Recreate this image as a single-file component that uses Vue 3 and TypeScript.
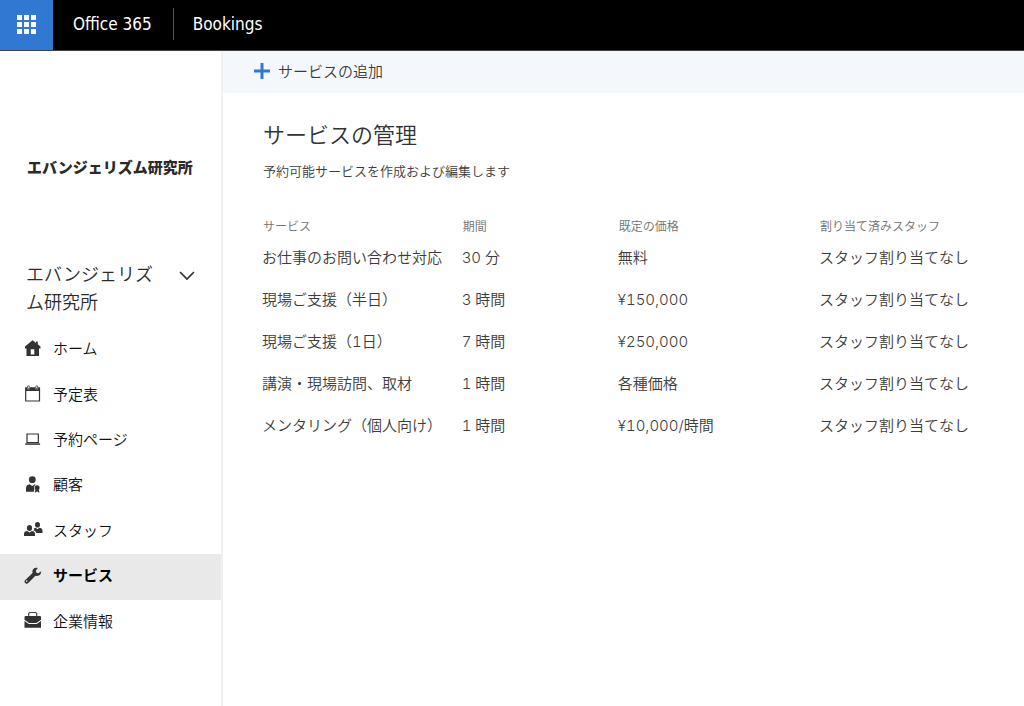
<script setup lang="ts">
import { ref } from 'vue'

interface NavItem {
  id: string
  label: string
}

interface Service {
  name: string
  duration: string
  price: string
  staff: string
}

const navItems: NavItem[] = [
  { id: 'home', label: 'ホーム' },
  { id: 'calendar', label: '予定表' },
  { id: 'page', label: '予約ページ' },
  { id: 'customers', label: '顧客' },
  { id: 'staff', label: 'スタッフ' },
  { id: 'services', label: 'サービス' },
  { id: 'business', label: '企業情報' },
]

const active = ref('services')

const services: Service[] = [
  { name: 'お仕事のお問い合わせ対応', duration: '30 分', price: '無料', staff: 'スタッフ割り当てなし' },
  { name: '現場ご支援（半日）', duration: '3 時間', price: '¥150,000', staff: 'スタッフ割り当てなし' },
  { name: '現場ご支援（1日）', duration: '7 時間', price: '¥250,000', staff: 'スタッフ割り当てなし' },
  { name: '講演・現場訪問、取材', duration: '1 時間', price: '各種価格', staff: 'スタッフ割り当てなし' },
  { name: 'メンタリング（個人向け）', duration: '1 時間', price: '¥10,000/時間', staff: 'スタッフ割り当てなし' },
]
</script>

<template>
  <div class="app">
    <header class="topbar">
      <button class="launcher" type="button" aria-label="アプリ起動ツール">
        <svg width="19" height="19" viewBox="0 0 19 19" fill="#fff" aria-hidden="true">
          <path d="M0 0h5v5H0zM7 0h5v5H7zM14 0h5v5h-5zM0 7h5v5H0zM7 7h5v5H7zM14 7h5v5h-5zM0 14h5v5H0zM7 14h5v5H7zM14 14h5v5h-5z" />
        </svg>
      </button>
      <a class="brand" href="#">Office 365</a>
      <a class="product" href="#">Bookings</a>
    </header>

    <div class="body">
      <aside class="sidebar">
        <div class="logo">エバンジェリズム研究所</div>
        <button class="business" type="button">
          <span class="business-name">エバンジェリズム研究所</span>
          <svg class="chevron" width="16" height="10" viewBox="0 0 16 10" fill="none" stroke="#333" stroke-width="1.7" aria-hidden="true">
            <path d="M1 1l7 7 7-7" />
          </svg>
        </button>
        <nav class="nav">
          <a
            v-for="item in navItems"
            :key="item.id"
            href="#"
            class="nav-item"
            :class="{ active: active === item.id }"
            :aria-current="active === item.id ? 'page' : undefined"
            @click.prevent="active = item.id"
          >
            <svg class="icon" width="20" height="20" viewBox="0 0 20 20" fill="#333" aria-hidden="true">
              <g v-if="item.id === 'home'">
                <path fill-rule="evenodd" d="M9.500 1.200L13 3.900V2.400h1.800v2.900L17.500 7.500v2H16V17H3.500V9.500H2v-2zM7.700 10.200V15.500h3.600v-5.300z" />
              </g>
              <g v-else-if="item.id === 'calendar'">
                <path d="M2.700 4h13.800v13H2.700z" fill="none" stroke="#333" stroke-width="1.200" />
                <path d="M2.500 3.500H4v1.700h2.800V3.500h5.600v1.700h2.800V3.500h1.500V7h-14.200z" />
                <path d="M4.600 1.900v2.700h1.700V1.900zM12.900 1.900v2.700h1.700V1.900z" fill="#fff" stroke="#555" stroke-width="0.800" />
              </g>
              <g v-else-if="item.id === 'page'">
                <path d="M4 4h11.300v8.500H4z" fill="none" stroke="#333" stroke-width="1.200" />
                <path d="M2.200 13.300h14.900v1.500H2.200z" />
              </g>
              <g v-else-if="item.id === 'customers'">
                <ellipse cx="9.300" cy="4.700" rx="3.400" ry="3.400" />
                <path d="M3 16.700v-3.500c0-2.200 1.200-3.800 3.600-4l2.700 1.700 2.600-1.600.9.500c-1.700.9-2.500 2.700-1.500 4.400l-.4 2.500z" />
                <circle cx="14.100" cy="12.700" r="2.500" />
                <path d="M12.500 14.700h3.200l.9 2.800-1.500-.3-1-.9-1 .9-1.500.3z" />
              </g>
              <g v-else-if="item.id === 'staff'">
                <ellipse cx="14.500" cy="4.700" rx="2.500" ry="2.800" />
                <path d="M11 8.300l1.800-.5 1.700 1.400 1.700-1.400c2.200.3 3.300 1.300 3.300 2.900v2.400h-6.300c-.2-1.400-1-2.100-2.500-2.500.6-.8.700-1.500.3-2.300z" />
                <ellipse cx="6.500" cy="8" rx="2.600" ry="2.900" />
                <path d="M1 16.100v-2.400c0-1.600 1.200-2.500 3.200-2.700l2.300 1.600L8.800 11c2 .2 3.200 1.100 3.200 2.700v2.400z" />
              </g>
              <g v-else-if="item.id === 'services'">
                <path fill-rule="evenodd" d="M14.800 2l-2 2.700.6 2 2 .5 2.700-2c.2 2.900-1.600 4.800-4.300 4.700l-1.400-.1-7.100 7.200c-.9.900-2.300.9-3.200.1-.8-.9-.8-2.200.2-3.100l7.300-6.900-.2-1.300c-.1-2.600 2-4.700 5.400-3.800zM3.700 14.300a.8.800 0 1 0 .1 1.600.8.800 0 0 0-.1-1.600z" />
              </g>
              <g v-else>
                <path d="M5.700 5V2.400l1-.9h6l1 .9V5" fill="none" stroke="#444" stroke-width="1.200" />
                <path d="M2 5h15.500l.5 1v2.700l-4.600 3.300H6.100L1.500 8.700V6z" />
                <path d="M1.500 10l4.300 3h7.900l4.300-3v6.700H1.500z" />
              </g>
            </svg>
            <span class="nav-label">{{ item.label }}</span>
          </a>
        </nav>
      </aside>

      <main class="main">
        <div class="toolbar">
          <button class="add" type="button">
            <svg width="16" height="16" viewBox="0 0 16 16" fill="#3078d2" aria-hidden="true">
              <path d="M6.500 0h3v6.500H16v3H9.500V16h-3V9.500H0v-3h6.500z" />
            </svg>
            <span class="add-label">サービスの追加</span>
          </button>
        </div>
        <section class="content">
          <div class="intro">
            <h1>サービスの管理</h1>
            <p class="subtitle">予約可能サービスを作成および編集します</p>
          </div>
          <table class="services">
            <thead>
              <tr>
                <th class="col-name" scope="col">サービス</th>
                <th class="col-duration" scope="col">期間</th>
                <th class="col-price" scope="col">既定の価格</th>
                <th scope="col">割り当て済みスタッフ</th>
              </tr>
            </thead>
            <tbody>
              <tr v-for="service in services" :key="service.name">
                <td>{{ service.name }}</td>
                <td>{{ service.duration }}</td>
                <td>{{ service.price }}</td>
                <td>{{ service.staff }}</td>
              </tr>
            </tbody>
          </table>
        </section>
      </main>
    </div>
  </div>
</template>

<style>
body {
  background: #fff;
}
</style>

<style scoped>
.app {
  display: flex;
  flex-direction: column;
  min-height: 100vh;
  font-family: Inter, "Noto Sans CJK JP", sans-serif;
  font-size: 15px;
  font-weight: 350;
  font-variant-numeric: tabular-nums;
  color: #3c3c3c;
}

button {
  margin: 0;
  padding: 0;
  border: 0;
  background: none;
  color: inherit;
  font: inherit;
  text-align: left;
  cursor: pointer;
}

a {
  color: inherit;
  text-decoration: none;
}

.topbar {
  display: flex;
  align-items: center;
  height: 50px;
  border-bottom: 1px solid #444;
  background: #000;
  color: #fff;
  font-family: "DejaVu Sans Condensed", "DejaVu Sans", sans-serif;
  font-size: 17px;
  font-weight: 400;
  line-height: 32px;
}

.launcher {
  display: flex;
  align-items: center;
  justify-content: center;
  align-self: stretch;
  width: 53px;
  padding-bottom: 2px;
  background: #3078d2;
}

.brand {
  padding: 0 21px 0 20px;
  border-right: 1px solid #555;
  margin-bottom: 2px;
}

.product {
  padding-left: 19px;
  margin-bottom: 2px;
}

.body {
  display: flex;
  flex: 1;
}

.sidebar {
  flex: none;
  box-sizing: border-box;
  width: 223px;
  border-right: 2px solid #f0f0f0;
}

.logo {
  padding: 104px 0 0 27px;
  color: #2b2b2b;
  font-size: 15px;
  font-weight: 900;
  line-height: 26px;
  white-space: nowrap;
}

.business {
  display: flex;
  align-items: flex-start;
  justify-content: space-between;
  width: 100%;
  padding: 80px 26px 10px 26px;
  color: #2b2b2b;
  font-size: 18px;
  line-height: 28px;
}

.business-name {
  width: 128px;
}

.chevron {
  margin-top: 10px;
}

.nav {
  display: grid;
  grid-auto-rows: 1fr;
  height: 318px;
}

.nav-item {
  display: flex;
  align-items: center;
  gap: 10px;
  padding: 0 0 2px 23px;
  color: #111;
}

.nav-label,
.add-label {
  padding-bottom: 2px;
}

.nav-item.active {
  background: #e9e9e9;
  color: #000;
  font-weight: 700;
}

.icon {
  flex: none;
}

.main {
  flex: 1;
  min-width: 0;
}

.toolbar {
  display: flex;
  align-items: center;
  box-sizing: border-box;
  height: 42px;
  padding: 0 0 2px 31px;
  background: #f4f8fd;
}

.add {
  display: flex;
  align-items: center;
  gap: 8px;
}

.content {
  padding: 26px 0 0 39px;
}

.intro {
  padding-left: 1px;
}

h1 {
  margin: 0;
  color: #333;
  font-size: 22px;
  font-weight: 350;
  line-height: 32px;
}

.subtitle {
  margin: 10px 0 0;
  font-size: 13px;
  line-height: 20px;
}

.services {
  width: 100%;
  margin-top: 36px;
  border-collapse: collapse;
  table-layout: fixed;
}

th {
  box-sizing: border-box;
  height: 20px;
  padding: 0 0 0 1px;
  color: #707070;
  font-size: 12px;
  font-weight: 350;
  line-height: 20px;
  text-align: left;
}

td {
  height: 42px;
  padding: 0;
  line-height: 20px;
  white-space: nowrap;
}

.col-name {
  width: 26.2%;
}

.col-duration {
  width: 20.5%;
}

.col-price {
  width: 26.4%;
}
</style>
